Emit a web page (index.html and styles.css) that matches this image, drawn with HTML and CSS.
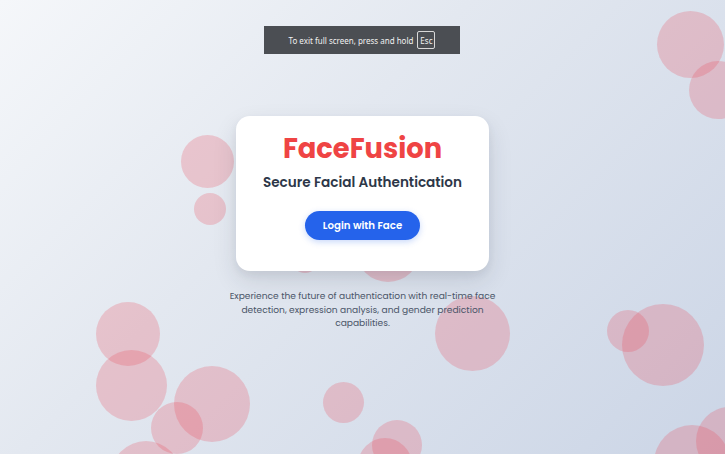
FILE: index.html
```html
<!DOCTYPE html>
<html lang="en">
<head>
<meta charset="utf-8">
<title>FaceFusion</title>
<link rel="stylesheet" href="styles.css">
</head>
<body>
<div class="bubbles" aria-hidden="true">
  <span class="bubble" style="left:657px;top:11px;width:67px;height:67px"></span>
  <span class="bubble" style="left:689px;top:61px;width:58px;height:58px"></span>
  <span class="bubble" style="left:181px;top:135px;width:53px;height:53px"></span>
  <span class="bubble" style="left:194px;top:193px;width:32px;height:32px"></span>
  <span class="bubble" style="left:356px;top:218px;width:64px;height:64px"></span>
  <span class="bubble" style="left:292px;top:247px;width:26px;height:26px"></span>
  <span class="bubble" style="left:435px;top:296px;width:75px;height:75px"></span>
  <span class="bubble" style="left:607px;top:310px;width:42px;height:42px"></span>
  <span class="bubble" style="left:622px;top:304px;width:82px;height:82px"></span>
  <span class="bubble" style="left:654px;top:425px;width:76px;height:76px"></span>
  <span class="bubble" style="left:696px;top:407px;width:68px;height:68px"></span>
  <span class="bubble" style="left:323px;top:382px;width:41px;height:41px"></span>
  <span class="bubble" style="left:372px;top:420px;width:50px;height:50px"></span>
  <span class="bubble" style="left:358px;top:438px;width:54px;height:54px"></span>
  <span class="bubble" style="left:96px;top:302px;width:64px;height:64px"></span>
  <span class="bubble" style="left:96px;top:350px;width:71px;height:71px"></span>
  <span class="bubble" style="left:174px;top:366px;width:76px;height:76px"></span>
  <span class="bubble" style="left:151px;top:402px;width:52px;height:52px"></span>
  <span class="bubble" style="left:111px;top:441px;width:70px;height:70px"></span>
</div>

<main class="page">
  <section class="card">
    <h1 class="brand">FaceFusion</h1>
    <h2 class="tagline">Secure Facial Authentication</h2>
    <button class="login-btn" type="button">Login with Face</button>
  </section>
  <p class="intro">Experience the future of authentication with real-time face detection, expression analysis, and gender prediction capabilities.</p>
</main>

<div class="fs-notice">To exit full screen, press and hold <span class="key">Esc</span></div>
</body>
</html>
```

FILE: styles.css
```css
* { box-sizing: border-box; }

html, body { height: 100%; }

body {
  margin: 0;
  overflow: hidden;
  font-family: "Poppins", "Inter", "Noto Sans", sans-serif;
  background: linear-gradient(135deg, #f5f7fa 0%, #e3e8f0 40%, #cbd5e6 100%);
  position: relative;
}

.bubbles {
  position: absolute;
  inset: 0;
  overflow: hidden;
}

.bubble {
  position: absolute;
  border-radius: 50%;
  background: rgba(236, 72, 88, 0.24);
}

.page {
  position: relative;
  z-index: 1;
  min-height: 100%;
  display: flex;
  flex-direction: column;
  align-items: center;
  justify-content: center;
  padding-bottom: 8px;
}

.card {
  width: 253px;
  background: #fff;
  border-radius: 14px;
  box-shadow: 0 10px 25px rgba(30, 41, 59, 0.12), 0 4px 8px rgba(30, 41, 59, 0.06);
  padding: 16px 12px 31px;
  display: flex;
  flex-direction: column;
  align-items: center;
}

.brand {
  margin: 0;
  font-size: 27.3px;
  line-height: 34px;
  font-weight: 700;
  color: #ef4444;
}

.tagline {
  margin: 8px 0 0;
  font-size: 13.6px;
  line-height: 18px;
  font-weight: 600;
  color: #2d3748;
  white-space: nowrap;
}

.login-btn {
  margin-top: 19px;
  width: 115px;
  height: 29px;
  border: 0;
  border-radius: 999px;
  background: #2563eb;
  color: #fff;
  font-family: inherit;
  font-size: 10.2px;
  font-weight: 600;
  box-shadow: 0 2px 6px rgba(37, 99, 235, 0.25);
}

.intro {
  margin: 18px 0 0;
  width: 290px;
  text-align: center;
  font-size: 9.1px;
  line-height: 13.5px;
  color: #4a5568;
}

.fs-notice {
  position: absolute;
  z-index: 5;
  left: 264px;
  top: 26px;
  width: 196px;
  height: 28px;
  background: #4b4e53;
  color: #f1f1f1;
  font-family: "Noto Sans", "Open Sans", sans-serif;
  font-size: 8px;
  display: flex;
  align-items: center;
  justify-content: center;
  gap: 4px;
}

.key {
  display: inline-flex;
  align-items: center;
  justify-content: center;
  width: 18px;
  height: 18px;
  border: 1px solid #d8d8d8;
  border-radius: 2px;
  font-size: 8px;
}
```
